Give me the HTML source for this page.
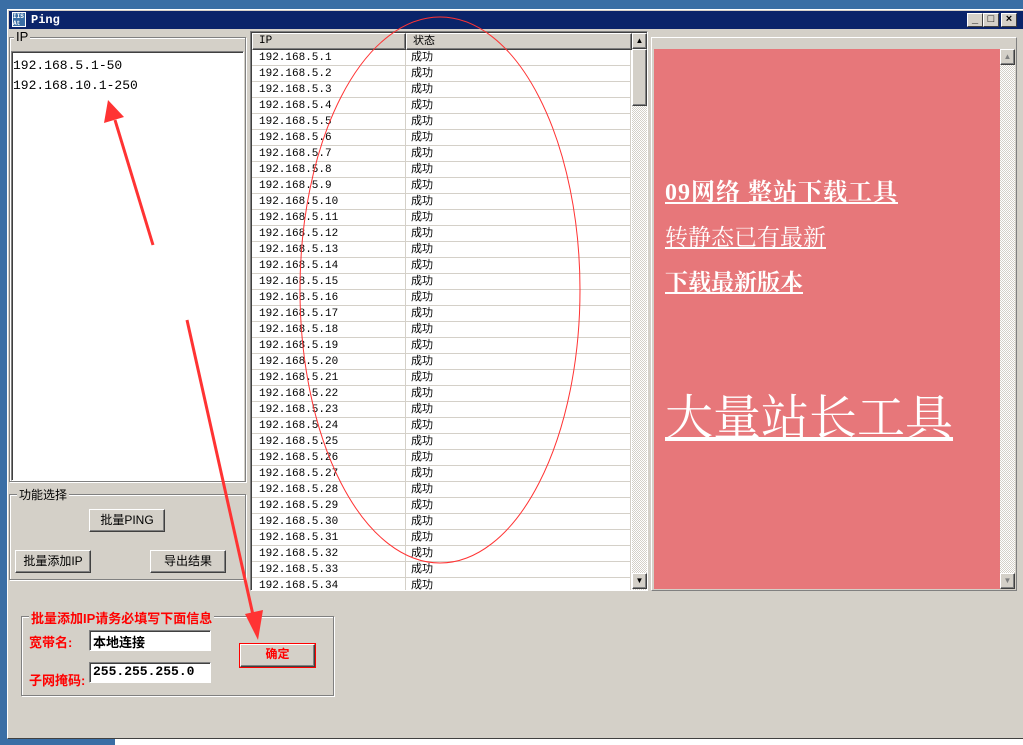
<!DOCTYPE html>
<html><head><meta charset="utf-8"><style>
*{margin:0;padding:0;box-sizing:border-box}
body{width:1023px;height:745px;overflow:hidden;background:#3a6ea5;position:relative;font-family:"Liberation Sans","Noto Sans CJK SC",sans-serif;font-size:12px}
.a{position:absolute}
.win{left:7px;top:9px;width:1016px;height:730px;background:#d4d0c8;border-top:1px solid #fff;border-left:1px solid #fff;border-bottom:1px solid #404040}
.title{left:9px;top:11px;width:1014px;height:18px;background:#0a246a;color:#fff;font-weight:bold;font-size:12px;font-family:"Liberation Mono",monospace}
.tb{width:16px;height:14px;background:#d4d0c8;border:1px solid;border-color:#fff #404040 #404040 #fff;top:13px;font-size:11px;text-align:center;line-height:11px;color:#000;font-weight:bold}
.grp{border:1px solid #808080;box-shadow:inset 1px 1px #fff,1px 1px #fff}
.lbl{background:#d4d0c8;padding:0 2px}
.sunk{border:1px solid;border-color:#808080 #fff #fff #808080;box-shadow:inset 1px 1px #404040}
.btn{background:#d4d0c8;border:1px solid;border-color:#fff #404040 #404040 #fff;box-shadow:inset -1px -1px #808080;text-align:center;font-size:12px}
.row{position:absolute;left:0;width:379px;height:16px;border-bottom:1px solid #d4d0c8;font-family:"Liberation Mono","Noto Sans CJK SC",monospace;font-size:11px;line-height:16px}
.row span{position:absolute}
.hatch{background:repeating-conic-gradient(#d4d0c8 0 25%,#fff 0 50%) 0 0/2px 2px}
.pink a{color:#fff;font-family:"Liberation Serif","Noto Serif CJK SC",serif;text-decoration:underline;position:absolute;left:11px;white-space:nowrap}
.red{color:#f00;font-weight:bold;font-size:12px}
</style></head><body>
<div class="a win"></div>
<div class="a title"><div class="a" style="left:3px;top:1px;width:14px;height:15px;background:#3a6ea5;border:1px solid #fff;font-size:6px;line-height:7px">IIS<br>At</div><span class="a" style="left:22px;top:2px">Ping</span></div>
<div class="a tb" style="left:967px">_</div><div class="a tb" style="left:983px">□</div><div class="a tb" style="left:1001px">×</div>

<div class="a grp" style="left:9px;top:37px;width:237px;height:445px"></div>
<div class="a lbl" style="left:14px;top:29px;font-size:13px">IP</div>
<div class="a sunk" style="left:11px;top:51px;width:233px;height:430px;background:#fff;font-family:'Liberation Mono',monospace;font-size:13px;line-height:20px;padding:4px 1px">192.168.5.1-50<br>192.168.10.1-250</div>

<div class="a grp" style="left:9px;top:494px;width:237px;height:86px"></div>
<div class="a lbl" style="left:17px;top:486px">功能选择</div>
<div class="a btn" style="left:89px;top:509px;width:76px;height:23px;line-height:21px">批量PING</div>
<div class="a btn" style="left:15px;top:550px;width:76px;height:23px;line-height:21px">批量添加IP</div>
<div class="a btn" style="left:150px;top:550px;width:76px;height:23px;line-height:21px">导出结果</div>

<div class="a grp" style="left:21px;top:616px;width:313px;height:80px"></div>
<div class="a lbl red" style="left:29px;top:608px;font-size:13px">批量添加IP请务必填写下面信息</div>
<div class="a red" style="left:29px;top:632px;font-size:13px">宽带名:</div>
<div class="a sunk" style="left:89px;top:630px;width:122px;height:21px;background:#fff;font-weight:bold;padding:1px 3px;font-size:13px">本地连接</div>
<div class="a red" style="left:29px;top:670px;font-size:13px">子网掩码:</div>
<div class="a sunk" style="left:89px;top:662px;width:122px;height:21px;background:#fff;font-weight:bold;padding:1px 3px;font-family:'Liberation Mono',monospace;font-size:13px">255.255.255.0</div>
<div class="a btn red" style="left:240px;top:644px;width:75px;height:23px;line-height:19px;outline:1px solid #f00">确定</div>

<div class="a sunk" style="left:250px;top:31px;width:398px;height:560px;background:#fff;overflow:hidden">
 <div class="a" style="left:1px;top:18px;width:380px;height:542px">
 <div class="a" style="left:153px;top:0;width:1px;height:542px;background:#d4d0c8"></div>
 <div class="a" style="left:378px;top:0;width:1px;height:542px;background:#d4d0c8"></div>
 <div id="rows"></div>
 </div>
 <div class="a btn" style="left:1px;top:1px;width:154px;height:17px;text-align:left;padding-left:6px;font-size:11px;line-height:15px;font-family:'Liberation Mono',monospace">IP</div>
 <div class="a btn" style="left:155px;top:1px;width:226px;height:17px;text-align:left;padding-left:6px;font-size:11px;line-height:15px">状态</div>
 <div class="a hatch" style="left:381px;top:17px;width:15px;height:541px"></div>
 <div class="a btn" style="left:381px;top:1px;width:15px;height:16px;font-size:8px;line-height:13px">▲</div>
 <div class="a btn" style="left:381px;top:17px;width:15px;height:57px"></div>
 <div class="a btn" style="left:381px;top:541px;width:15px;height:16px;font-size:8px;line-height:13px">▼</div>
</div>

<div class="a sunk" style="left:651px;top:37px;width:366px;height:554px;border-color:#fff #808080 #808080 #fff;box-shadow:none"></div>
<div class="a pink" style="left:654px;top:49px;width:346px;height:540px;background:#e7777a">
 <a style="top:123px;font-size:24px;font-weight:bold;letter-spacing:1px">09网络 整站下载工具</a>
 <a style="top:170px;font-size:23px">转静态已有最新</a>
 <a style="top:215px;font-size:23px;font-weight:bold">下载最新版本</a>
 <a style="top:330px;font-size:48px">大量站长工具</a>
</div>
<div class="a hatch" style="left:1000px;top:49px;width:15px;height:540px"></div>
<div class="a btn" style="left:1000px;top:49px;width:15px;height:16px;color:#808080;font-size:8px;line-height:13px">▲</div>
<div class="a btn" style="left:1000px;top:573px;width:15px;height:16px;color:#808080;font-size:8px;line-height:13px">▼</div>

<div class="a" style="left:0;top:739px;width:1023px;height:6px;background:#fff"></div>
<div class="a" style="left:0;top:739px;width:115px;height:6px;background:#3a6ea5"></div>

<svg class="a" style="left:0;top:0" width="1023" height="745">
<ellipse cx="440" cy="290" rx="140" ry="273" fill="none" stroke="#f33" stroke-width="1"/>
<line x1="153" y1="245" x2="115" y2="120" stroke="#f33" stroke-width="3"/>
<polygon points="108,100 104,123 124,117" fill="#f33"/>
<line x1="187" y1="320" x2="253" y2="615" stroke="#f33" stroke-width="3"/>
<polygon points="258,640 245,614 263,610" fill="#f33"/>
</svg>
<script>
var h='';for(var i=1;i<=34;i++){h+='<div class="row" style="top:'+((i-1)*16)+'px"><span style="left:7px">192.168.5.'+i+'</span><span style="left:159px">成功</span></div>'}
document.getElementById('rows').innerHTML=h;
</script>
</body></html>
